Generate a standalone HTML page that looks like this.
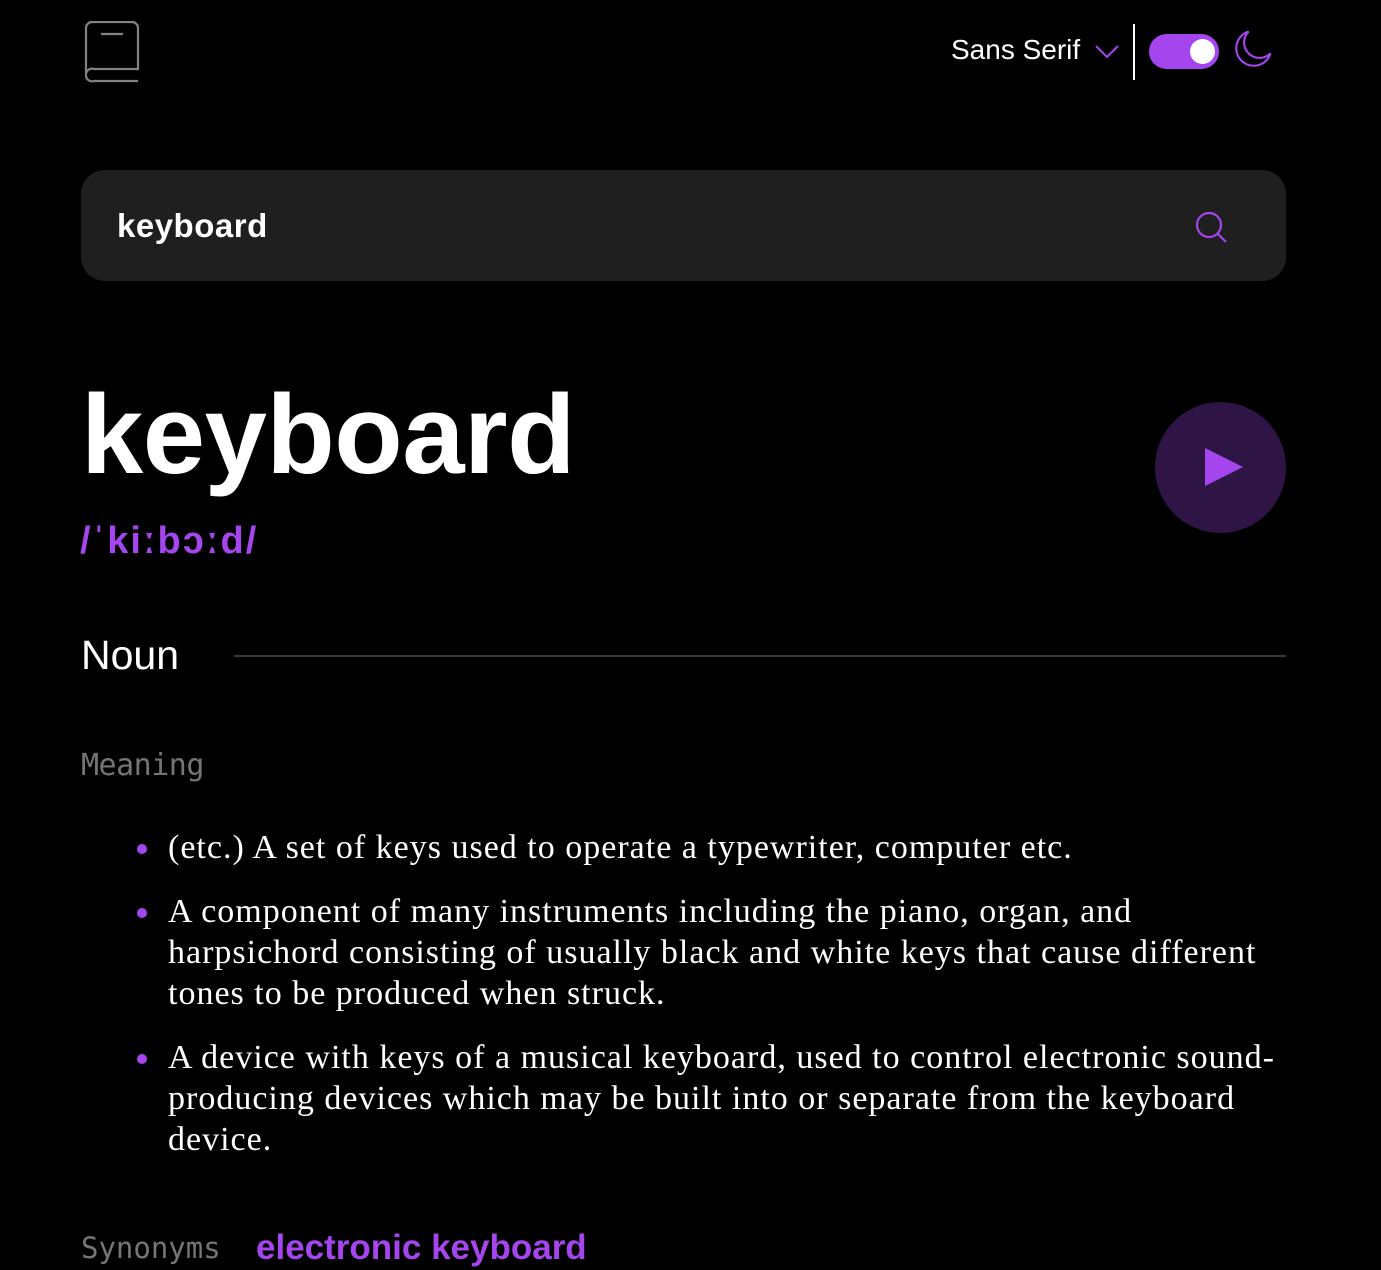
<!DOCTYPE html>
<html><head><style>
body{margin:0;background:#000;width:1381px;height:1270px;overflow:hidden;font-family:"Liberation Sans",sans-serif;color:#fff;position:relative}
.a{position:absolute}
.search{left:81px;top:170px;width:1205px;height:111px;background:#1f1f1f;border-radius:24px}
ul{margin:0;padding:0;list-style:none}
li{position:relative;font-family:"Liberation Serif",serif;font-size:34px;letter-spacing:1px;line-height:41px;margin-bottom:23px}
li:before{content:"";position:absolute;left:-31px;top:17px;width:10px;height:10px;border-radius:50%;background:#a445ed}
</style></head><body>
<svg class="a" style="left:84px;top:21px" width="56" height="62" viewBox="0 0 56 62" fill="none" stroke="#838383" stroke-width="2.2"><path d="M2 53V7a6 6 0 0 1 6-6h40a6 6 0 0 1 6 6v41H10a6 6 0 0 0-8 6a6 6 0 0 0 8 6h44"/><path d="M17 13h22"/></svg>
<div class="a" style="left:951px;top:34px;font-size:28px">Sans Serif</div>
<svg class="a" style="left:1095px;top:44px" width="24" height="16" viewBox="0 0 24 16" fill="none" stroke="#a445ed" stroke-width="2"><path d="M1 2l11 11L23 2"/></svg>
<div class="a" style="left:1133px;top:24px;width:2px;height:56px;background:#fff"></div>
<div class="a" style="left:1149px;top:34px;width:70px;height:35px;border-radius:18px;background:#a445ed"><div class="a" style="left:41px;top:5px;width:25px;height:25px;border-radius:50%;background:#fff"></div></div>
<svg class="a" style="left:1232px;top:28px" width="42" height="42" viewBox="0 0 24 24" fill="none" stroke="#a445ed" stroke-width="1.2"><path d="M22 14.5A10 10 0 1 1 9.5 2a8 8 0 0 0 12.5 12.5z"/></svg>
<div class="a search"></div>
<div class="a" style="left:117px;top:207px;font-size:33px;font-weight:bold;letter-spacing:0.5px">keyboard</div>
<svg class="a" style="left:1194px;top:210px" width="34" height="34" viewBox="0 0 34 34" fill="none" stroke="#a445ed" stroke-width="2.2"><circle cx="15" cy="15" r="12"/><path d="M24 24l8 8"/></svg>
<div class="a" style="left:81px;top:370px;font-size:112px;font-weight:bold;letter-spacing:-0.5px">keyboard</div>
<div class="a" style="left:80px;top:520px;font-size:38px;font-weight:bold;color:#a445ed;letter-spacing:2px">/ˈkiːbɔːd/</div>
<div class="a" style="left:1155px;top:402px;width:131px;height:131px;border-radius:50%;background:#2e1546"></div>
<svg class="a" style="left:1205px;top:448px" width="38" height="38" viewBox="0 0 38 38"><path d="M0 0L38 19L0 38z" fill="#a445ed"/></svg>
<div class="a" style="left:81px;top:632px;font-size:41px">Noun</div>
<div class="a" style="left:234px;top:655px;width:1052px;height:2px;background:#3a3a3a"></div>
<div class="a" style="left:81px;top:748px;font-size:30px;font-family:'DejaVu Sans Mono','Liberation Mono',monospace;color:#757575;letter-spacing:-0.5px">Meaning</div>
<ul class="a" style="left:168px;top:827px;width:1110px">
<li>(etc.) A set of keys used to operate a typewriter, computer etc.</li>
<li>A component of many instruments including the piano, organ, and harpsichord consisting of usually black and white keys that cause different tones to be produced when struck.</li>
<li>A device with keys of a musical keyboard, used to control electronic sound-producing devices which may be built into or separate from the keyboard device.</li>
</ul>
<div class="a" style="left:81px;top:1231px;font-size:29px;font-family:'DejaVu Sans Mono','Liberation Mono',monospace;color:#757575;letter-spacing:0px">Synonyms</div>
<div class="a" style="left:256px;top:1228px;font-size:35px;font-weight:bold;color:#a445ed">electronic keyboard</div>
</body></html>
